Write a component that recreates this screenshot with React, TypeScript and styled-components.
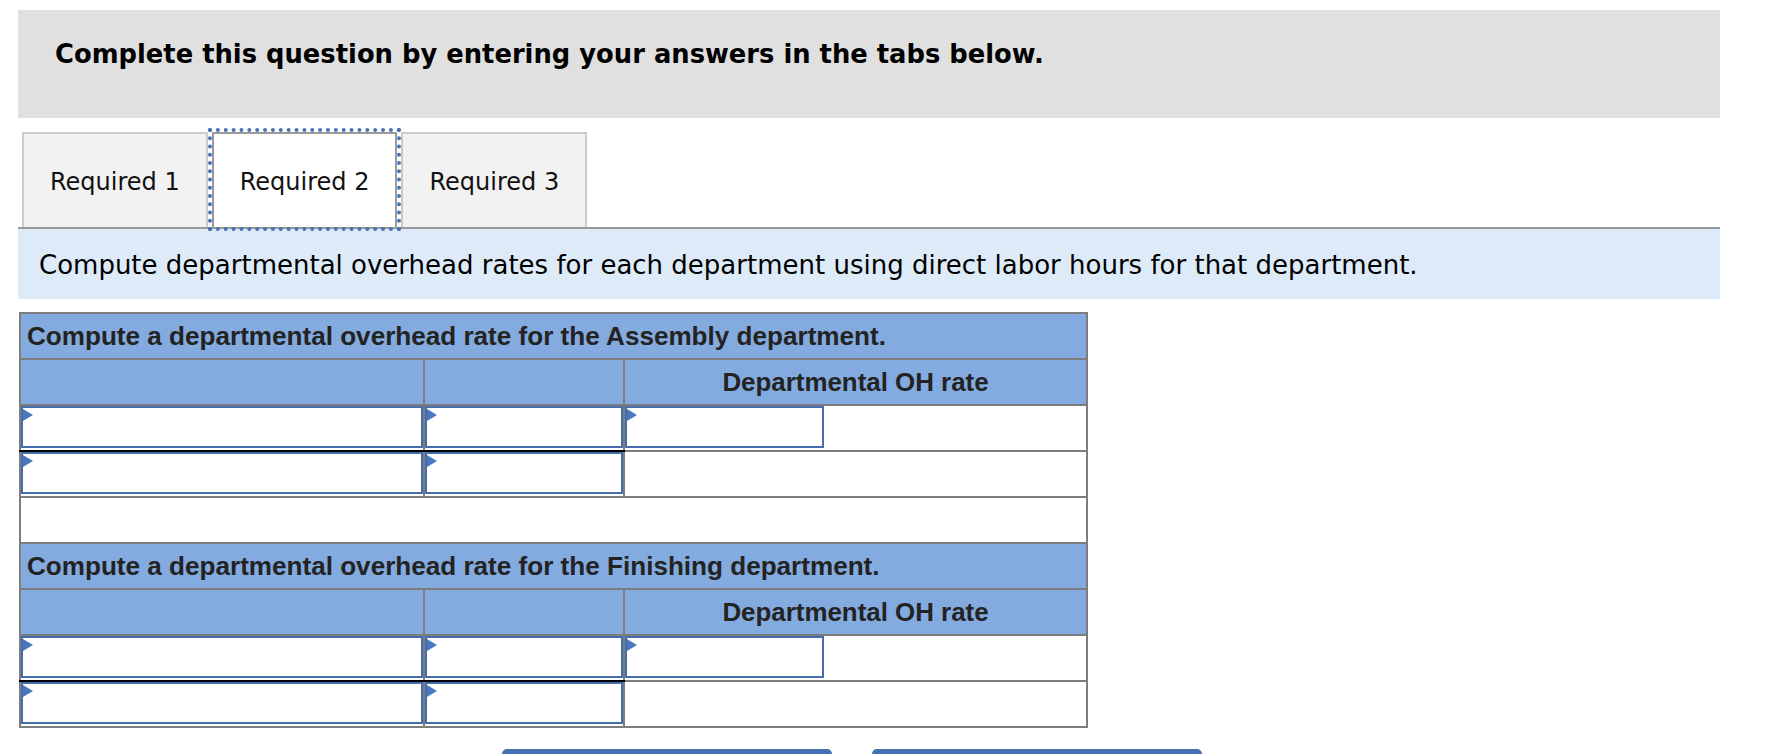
import React from "react";
import styled, { createGlobalStyle } from "styled-components";

const GlobalStyle = createGlobalStyle`
  html, body { margin: 0; padding: 0; background: #ffffff; }
  body { font-family: "DejaVu Sans", Verdana, sans-serif; color: #000; }
`;

const Page = styled.div`
  padding: 10px 0 0 18px;
  width: 1702px;
`;

const Banner = styled.div`
  box-sizing: border-box;
  height: 108px;
  background: #e0e0e0;
  padding: 29px 0 0 37px;
  font-family: "DejaVu Sans", Verdana, sans-serif;
  font-weight: bold;
  font-size: 25.8px;
  line-height: 30px;
  color: #000;
`;

const TabList = styled.div`
  display: flex;
  align-items: stretch;
  margin-top: 14px;
  padding-left: 4px;
  height: 95px;
  border-bottom: 2px solid #999999;
`;

const Tab = styled.button<{ $active?: boolean }>`
  box-sizing: border-box;
  height: 95px;
  margin: ${(p) => (p.$active ? "0 4px" : "0")};
  padding: 2px 26px 0;
  border: 2px solid ${(p) => (p.$active ? "#9a9a9a" : "#cbcbcb")};
  border-bottom: none;
  background: ${(p) => (p.$active ? "#ffffff" : "#f2f2f2")};
  outline: ${(p) => (p.$active ? "4px dotted #4a72b4" : "none")};
  outline-offset: 0;
  font-family: "DejaVu Sans", Verdana, sans-serif;
  font-size: 24px;
  color: #111;
  cursor: pointer;
  white-space: nowrap;
`;

const Prompt = styled.div`
  box-sizing: border-box;
  height: 70px;
  background: #ddeaf8;
  padding: 21px 21px 0;
  font-family: "DejaVu Sans", Verdana, sans-serif;
  font-size: 26px;
  line-height: 30px;
  color: #000;
`;

const Sheet = styled.table`
  margin: 13px 0 0 1px;
  border-collapse: collapse;
  table-layout: fixed;
  width: 1067px;
  font-family: "Liberation Sans", Arial, sans-serif;
  font-weight: bold;
  font-size: 25.9px;
  color: #232323;
`;

const Row = styled.tr`
  height: 46px;
`;

const Cell = styled.td<{
  $blue?: boolean;
  $blackBottom?: boolean;
  $blackTop?: boolean;
  $hideRight?: boolean;
  $hideLeft?: boolean;
  $center?: boolean;
  $top?: boolean;
}>`
  padding: 0;
  border: 2px solid #7d7d7d;
  ${(p) => (p.$blackBottom ? "border-bottom-color: #000000;" : "")}
  ${(p) => (p.$blackTop ? "border-top-color: #000000;" : "")}
  ${(p) => (p.$hideRight ? "border-right-style: hidden;" : "")}
  ${(p) => (p.$hideLeft ? "border-left-style: hidden;" : "")}
  background: ${(p) => (p.$blue ? "#83abdf" : "#ffffff")};
  text-align: ${(p) => (p.$center ? "center" : "left")};
  vertical-align: ${(p) => (p.$top ? "top" : "middle")};
  line-height: 29px;
`;

const TitleCell = styled(Cell)`
  padding: 0 6px;
  font-size: 26.1px;
`;

const EntryWrap = styled.div`
  position: relative;
  height: 42px;
`;

const Entry = styled.input`
  box-sizing: border-box;
  display: block;
  width: 100%;
  height: 42px;
  margin: 0;
  border: 2px solid #456cad;
  background: #ffffff;
  outline: none;
  font-family: "Liberation Sans", Arial, sans-serif;
  font-size: 22px;
`;

const Marker = styled.span`
  position: absolute;
  left: 2px;
  top: 3px;
  width: 0;
  height: 0;
  border-left: 10px solid #4a78c0;
  border-top: 6px solid transparent;
  border-bottom: 6px solid transparent;
`;

const NavBar = styled.div`
  display: flex;
  gap: 40px;
  margin-top: 21px;
  padding-left: 484px;
`;

const NavButton = styled.button`
  width: 330px;
  height: 52px;
  border: none;
  border-radius: 5px;
  background: #4672b4;
  color: #ffffff;
  font-family: "DejaVu Sans", Verdana, sans-serif;
  font-size: 22.4px;
  cursor: pointer;
`;

const InputBox: React.FC = () => (
  <EntryWrap>
    <Entry type="text" />
    <Marker />
  </EntryWrap>
);

const Department: React.FC<{ name: string }> = ({ name }) => (
  <>
    <Row>
      <TitleCell colSpan={4} $blue>
        Compute a departmental overhead rate for the {name} department.
      </TitleCell>
    </Row>
    <Row>
      <Cell $blue />
      <Cell $blue />
      <Cell $blue $center colSpan={2}>
        Departmental OH rate
      </Cell>
    </Row>
    <Row>
      <Cell $top $blackBottom>
        <InputBox />
      </Cell>
      <Cell $top $blackBottom>
        <InputBox />
      </Cell>
      <Cell $top $hideRight>
        <InputBox />
      </Cell>
      <Cell $hideLeft />
    </Row>
    <Row>
      <Cell $top $blackTop>
        <InputBox />
      </Cell>
      <Cell $top $blackTop>
        <InputBox />
      </Cell>
      <Cell colSpan={2} />
    </Row>
  </>
);

export default function App() {
  return (
    <>
      <GlobalStyle />
      <Page>
        <Banner>Complete this question by entering your answers in the tabs below.</Banner>
        <TabList>
          <Tab>Required 1</Tab>
          <Tab $active>Required 2</Tab>
          <Tab>Required 3</Tab>
        </TabList>
        <Prompt>
          Compute departmental overhead rates for each department using direct labor hours for that department.
        </Prompt>
        <Sheet>
          <colgroup>
            <col style={{ width: 404 }} />
            <col style={{ width: 200 }} />
            <col style={{ width: 200 }} />
            <col style={{ width: 263 }} />
          </colgroup>
          <tbody>
            <Department name="Assembly" />
            <Row>
              <Cell colSpan={4} />
            </Row>
            <Department name="Finishing" />
          </tbody>
        </Sheet>
        <NavBar>
          <NavButton>&lsaquo; Required 1</NavButton>
          <NavButton>Required 3 &rsaquo;</NavButton>
        </NavBar>
      </Page>
    </>
  );
}
